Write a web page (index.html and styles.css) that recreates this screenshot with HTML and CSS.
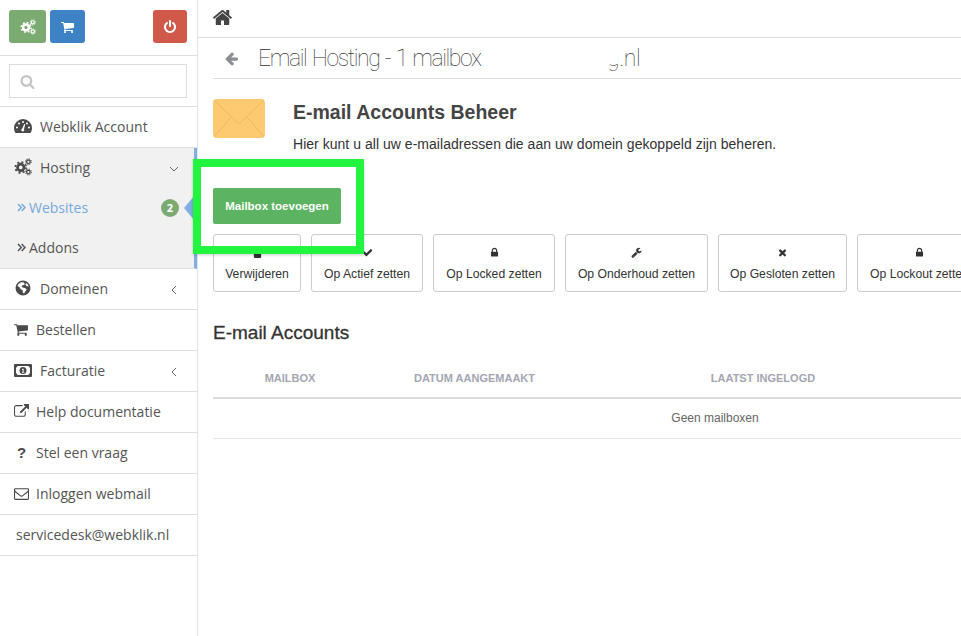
FILE: index.html
```html
<!DOCTYPE html>
<html lang="nl">
<head>
<meta charset="utf-8">
<title>Email Hosting</title>
<link rel="stylesheet" href="styles.css">
</head>
<body>
<svg class="defs" width="0" height="0" aria-hidden="true">
  <defs>
    <symbol id="i-cart" viewBox="0 0 1792 1792"><path d="M640 1536q0 52-38 90t-90 38-90-38-38-90 38-90 90-38 90 38 38 90zm896 0q0 52-38 90t-90 38-90-38-38-90 38-90 90-38 90 38 38 90zm128-1088v512q0 24-16.5 42.5t-40.5 21.5l-1044 122q13 60 13 70 0 16-24 64h920q26 0 45 19t19 45-19 45-45 19h-1024q-26 0-45-19t-19-45q0-11 8-31.5t16-36 21.5-40 15.5-29.5l-177-823h-204q-26 0-45-19t-19-45 19-45 45-19h256q16 0 28.5 6.5t19.5 15.5 13 24.5 8 26 5.5 29.5 4.5 26h1201q26 0 45 19t19 45z"/></symbol>
    <symbol id="i-home" viewBox="0 0 1792 1792"><path d="M1472 992v480q0 26-19 45t-45 19h-384v-384h-256v384h-384q-26 0-45-19t-19-45v-480q0-1 .5-3t.5-3l575-474 575 474q1 2 1 6zm223-69l-62 74q-8 9-21 11h-3q-13 0-21-7l-692-577-692 577q-12 8-24 7-13-2-21-11l-62-74q-8-10-7-23.5t11-21.5l719-599q32-26 76-26t76 26l244 204v-195q0-14 9-23t23-9h192q14 0 23 9t9 23v408l219 182q10 8 11 21.5t-7 23.5z"/></symbol>
    <symbol id="i-lock" viewBox="0 0 1792 1792"><path d="M640 768h512v-192q0-106-75-181t-181-75-181 75-75 181v192zm832 96v576q0 40-28 68t-68 28h-960q-40 0-68-28t-28-68v-576q0-40 28-68t68-28h32v-192q0-184 132-316t316-132 316 132 132 316v192h32q40 0 68 28t28 68z"/></symbol>
    <symbol id="i-check" viewBox="0 0 1792 1792"><path d="M1671 566q0 40-28 68l-724 724-136 136q-28 28-68 28t-68-28l-136-136-362-362q-28-28-28-68t28-68l136-136q28-28 68-28t68 28l294 295 656-657q28-28 68-28t68 28l136 136q28 28 28 68z"/></symbol>
    <symbol id="i-times" viewBox="0 0 1792 1792"><path d="M1490 1322q0 40-28 68l-136 136q-28 28-68 28t-68-28l-294-294-294 294q-28 28-68 28t-68-28l-136-136q-28-28-28-68t28-68l294-294-294-294q-28-28-28-68t28-68l136-136q28-28 68-28t68 28l294 294 294-294q28-28 68-28t68 28l136 136q28 28 28 68t-28 68l-294 294 294 294q28 28 28 68z"/></symbol>
    <symbol id="i-search" viewBox="0 0 1792 1792"><path d="M1216 832q0-185-131.5-316.5t-316.5-131.5-316.5 131.5-131.5 316.5 131.5 316.5 316.5 131.5 316.5-131.5 131.5-316.5zm512 832q0 52-38 90t-90 38q-54 0-90-38l-343-342q-179 124-399 124-143 0-273.5-55.5t-225-150-150-225-55.5-273.5 55.5-273.5 150-225 225-150 273.5-55.5 273.5 55.5 225 150 150 225 55.5 273.5q0 220-124 399l343 343q37 37 37 90z"/></symbol>
    <symbol id="i-left" viewBox="0 0 1792 1792"><path d="M1664 896v128q0 53-32.5 90.5t-84.5 37.5h-704l293 294q38 36 38 90t-38 90l-75 76q-37 37-90 37-52 0-91-37l-651-652q-37-37-37-90 0-52 37-91l651-650q38-38 91-38 52 0 90 38l75 74q38 38 38 91t-38 91l-293 293h704q52 0 84.5 37.5t32.5 90.5z"/></symbol>
    <symbol id="i-power" viewBox="0 0 1792 1792"><path d="M1664 896q0 156-61 298t-164 245-245 164-298 61-298-61-245-164-164-245-61-298q0-182 80.5-343t226.5-270q43-32 95.5-25t83.5 50q32 42 24.5 94.5t-49.5 84.5q-98 74-151.5 181t-53.5 228q0 104 40.5 198.5t109.5 163.5 163.5 109.5 198.5 40.5 198.5-40.5 163.5-109.5 109.5-163.5 40.5-198.5q0-121-53.5-228t-151.5-181q-42-32-49.5-84.5t24.5-94.5q31-43 84-50t95 25q146 109 226.5 270t80.5 343zm-640-768v640q0 52-38 90t-90 38-90-38-38-90v-640q0-52 38-90t90-38 90 38 38 90z"/></symbol>
    <symbol id="i-wrench" viewBox="0 0 1792 1792"><path d="M448 1472q0-26-19-45t-45-19-45 19-19 45 19 45 45 19 45-19 19-45zm644-420l-682 682q-37 37-90 37-52 0-91-37l-106-108q-38-36-38-90 0-53 38-91l681-681q39 98 114.5 173.5t173.5 114.5zm634-435q0 39-23 106-47 134-164.5 217.5t-258.5 83.5q-185 0-316.5-131.5t-131.5-316.5 131.5-316.5 316.5-131.5q58 0 121.5 16.5t107.5 46.5q16 11 16 28t-16 28l-293 169v224l193 107q5-3 79-48.5t135.5-81 70.5-35.5q15 0 23.5 10t8.5 25z"/></symbol>
    <symbol id="i-ext" viewBox="0 0 1792 1792"><path d="M1408 928v320q0 119-84.5 203.5t-203.5 84.5h-832q-119 0-203.5-84.5t-84.5-203.5v-832q0-119 84.5-203.5t203.5-84.5h704q14 0 23 9t9 23v64q0 14-9 23t-23 9h-704q-66 0-113 47t-47 113v832q0 66 47 113t113 47h832q66 0 113-47t47-113v-320q0-14 9-23t23-9h64q14 0 23 9t9 23zm384-864v512q0 26-19 45t-45 19-45-19l-176-176-652 652q-10 10-23 10t-23-10l-114-114q-10-10-10-23t10-23l652-652-176-176q-19-19-19-45t19-45 45-19h512q26 0 45 19t19 45z"/></symbol>
    <symbol id="i-mail" viewBox="0 0 1792 1792"><path d="M1664 1504v-768q-32 36-69 66-268 206-426 338-51 43-83 67t-86.5 48.5-102.5 24.5h-2q-48 0-102.5-24.5t-86.5-48.5-83-67q-158-132-426-338-37-30-69-66v768q0 13 9.5 22.5t22.5 9.5h1472q13 0 22.5-9.5t9.5-22.5zm0-1051v-24.5l-.5-13-3-12.5-5.5-9-9-7.5-14-2.5h-1472q-13 0-22.5 9.5t-9.5 22.5q0 168 147 284 193 152 401 317 6 5 35 29.5t46 37.5 44.5 31.5 50.5 27.5 43 9h2q20 0 43-9t50.5-27.5 44.5-31.5 46-37.5 35-29.5q208-165 401-317 54-43 100.5-115.5t46.5-131.5zm128-37v1088q0 66-47 113t-113 47h-1472q-66 0-113-47t-47-113v-1088q0-66 47-113t113-47h1472q66 0 113 47t47 113z"/></symbol>
    <symbol id="i-cogs" viewBox="0 0 20 20">
      <circle cx="7.5" cy="10.5" r="3.6" fill="none" stroke="currentColor" stroke-width="3"/>
      <circle cx="7.5" cy="10.5" r="6" fill="none" stroke="currentColor" stroke-width="2" stroke-dasharray="2.3 2.41"/>
      <circle cx="16" cy="4.2" r="2" fill="none" stroke="currentColor" stroke-width="1.5"/>
      <circle cx="16" cy="4.2" r="3.3" fill="none" stroke="currentColor" stroke-width="1.1" stroke-dasharray="1.3 1.29"/>
      <circle cx="16" cy="15.6" r="2" fill="none" stroke="currentColor" stroke-width="1.5"/>
      <circle cx="16" cy="15.6" r="3.3" fill="none" stroke="currentColor" stroke-width="1.1" stroke-dasharray="1.3 1.29"/>
    </symbol>
    <symbol id="i-gauge" viewBox="0 0 18 14">
      <path fill-rule="evenodd" d="M9 0a9 9 0 0 1 9 9c0 1.800-.5 3.500-1.400 4.800-.2.200-.4.200-.6.200H2c-.2 0-.4 0-.6-.2A9 9 0 0 1 0 9a9 9 0 0 1 9-9zM9 2a1 1 0 1 0 0 2 1 1 0 0 0 0-2zM5 3.500a1 1 0 1 0 0 2 1 1 0 0 0 0-2zM13 3.500a1 1 0 1 0 0 2 1 1 0 0 0 0-2zM3 7.500a1 1 0 1 0 0 2 1 1 0 0 0 0-2zM15 7.500a1 1 0 1 0 0 2 1 1 0 0 0 0-2zM10.200 5l-1.900 4.600a1.500 1.500 0 1 0 1.700.6l1.200-4.900z"/>
    </symbol>
    <symbol id="i-globe" viewBox="0 0 16 16">
      <path fill-rule="evenodd" d="M8 .5a7.500 7.500 0 1 1 0 15 7.500 7.500 0 0 1 0-15zM6 2.300C4.500 3 3 4.500 2.500 6l2 1.200 1.500 2.300 1.600.5.200 2.200 1.200 1.600 1.200-2.200 1.500-1.800-1.300-1.600-2.600-.8-1.300-1 1-1.200 1.700-.3.500-1.300-1.500-1.300zM11.500 3.200l-1.200 1.400 1.200 1.500 2.200.5c-.4-1.500-1.100-2.700-2.200-3.400z"/>
    </symbol>
    <symbol id="i-money" viewBox="0 0 18 13">
      <path fill-rule="evenodd" d="M1 0h16a1 1 0 0 1 1 1v11a1 1 0 0 1-1 1H1a1 1 0 0 1-1-1V1a1 1 0 0 1 1-1zM3.500 2A2 2 0 0 1 2 3.700v5.600A2 2 0 0 1 3.500 11h11a2 2 0 0 1 1.500-1.700V3.700A2 2 0 0 1 14.500 2zM9 3a3.500 3.500 0 1 1 0 7 3.500 3.500 0 0 1 0-7zM8 5v.8h.6V8H8v.7h2.300V8h-.7V4.800h-.8z"/>
    </symbol>
    <symbol id="i-dbl" viewBox="0 0 9 9">
      <path fill="none" stroke="currentColor" stroke-width="1.500" d="M1 1l3.300 3.500L1 8M4.700 1L8 4.500 4.700 8"/>
    </symbol>
    <symbol id="i-trash" viewBox="0 0 12 12">
      <path d="M4.500 0h3l.6 1.500H11v1.300H1V1.500h2.900zM2 3.500h8v7.300A1.200 1.200 0 0 1 8.800 12H3.200A1.200 1.200 0 0 1 2 10.800z"/>
    </symbol>
  </defs>
</svg>

<div class="app">
  <aside class="sidebar">
    <div class="tools">
      <a class="tool tool-green"><svg class="tool-cogs"><use href="#i-cogs"/></svg></a>
      <a class="tool tool-blue"><svg class="tool-icon"><use href="#i-cart"/></svg></a>
      <a class="tool tool-red"><svg class="tool-icon"><use href="#i-power"/></svg></a>
    </div>
    <div class="search">
      <div class="search-box"><svg class="search-icon"><use href="#i-search"/></svg></div>
    </div>
    <nav>
      <a class="row wide"><svg class="ico ico-gauge"><use href="#i-gauge"/></svg>Webklik Account</a>
      <div class="group">
        <a class="row-in wide"><svg class="ico ico-cogs"><use href="#i-cogs"/></svg>Hosting<svg class="chev" viewBox="0 0 10 10"><path d="M1 3l4 4 4-4"/></svg></a>
        <a class="sub sub-active"><svg class="dbl"><use href="#i-dbl"/></svg>Websites<span class="badge">2</span><span class="pointer"></span></a>
        <a class="sub"><svg class="dbl"><use href="#i-dbl"/></svg>Addons</a>
      </div>
      <a class="row wide"><svg class="ico ico-globe"><use href="#i-globe"/></svg>Domeinen<svg class="chev" viewBox="0 0 10 10"><path d="M7 1L3 5l4 4"/></svg></a>
      <a class="row"><svg class="ico"><use href="#i-cart"/></svg>Bestellen</a>
      <a class="row wide"><svg class="ico ico-money"><use href="#i-money"/></svg>Facturatie<svg class="chev" viewBox="0 0 10 10"><path d="M7 1L3 5l4 4"/></svg></a>
      <a class="row"><svg class="ico"><use href="#i-ext"/></svg>Help documentatie</a>
      <a class="row"><span class="ico ico-q">?</span>Stel een vraag</a>
      <a class="row"><svg class="ico"><use href="#i-mail"/></svg>Inloggen webmail</a>
      <a class="row plain">servicedesk@webklik.nl</a>
    </nav>
  </aside>

  <main class="main">
    <div class="topbar"><svg class="home"><use href="#i-home"/></svg></div>
    <div class="page">
      <div class="titlebar">
        <svg class="back"><use href="#i-left"/></svg>
        <h1>Email Hosting - 1 mailbox</h1>
        <span class="domain"><span class="domain-g">g</span>.nl<span class="redact"></span></span>
      </div>
      <div class="intro">
        <svg class="envelope" viewBox="0 0 52 39">
          <rect width="52" height="39" rx="4" fill="#fdca72"/>
          <path d="M1 1l25 24L51 1M1 38l17-20M51 38L34 18" fill="none" stroke="#ecb75d" stroke-width="1"/>
        </svg>
        <div>
          <h2>E-mail Accounts Beheer</h2>
          <p>Hier kunt u all uw e-mailadressen die aan uw domein gekoppeld zijn beheren.</p>
        </div>
      </div>
      <a class="add">Mailbox toevoegen</a>
      <div class="actions">
        <a class="action"><svg><use href="#i-trash"/></svg>Verwijderen</a>
        <a class="action"><svg><use href="#i-check"/></svg>Op Actief zetten</a>
        <a class="action"><svg><use href="#i-lock"/></svg>Op Locked zetten</a>
        <a class="action"><svg><use href="#i-wrench"/></svg>Op Onderhoud zetten</a>
        <a class="action"><svg><use href="#i-times"/></svg>Op Gesloten zetten</a>
        <a class="action"><svg><use href="#i-lock"/></svg>Op Lockout zetten</a>
      </div>
      <h3>E-mail Accounts</h3>
      <div class="table">
        <div class="thead">
          <span>MAILBOX</span><span>DATUM AANGEMAAKT</span><span>LAATST INGELOGD</span><span></span>
        </div>
        <div class="empty">Geen mailboxen</div>
      </div>
    </div>
  </main>
</div>
<div class="callout"></div>
</body>
</html>
```
FILE: styles.css
```css
* { box-sizing: border-box; }
html, body { margin: 0; height: 100%; overflow: hidden; background: #fff; }
body { position: relative; width: 961px; height: 636px; font-family: "Liberation Sans", Arial, sans-serif; color: #333; }
.defs { position: absolute; }
svg { fill: currentColor; display: block; }

.app { display: flex; height: 636px; }

.sidebar { width: 198px; flex: none; border-right: 1px solid #e2e2e2; font-family: "Open Sans", sans-serif; font-size: 14px; color: #555; }
.tools { height: 56px; display: flex; padding: 10px 10px 0 9px; border-bottom: 1px solid #dedede; gap: 4px; }
.tool { height: 33px; border-radius: 3px; display: flex; align-items: center; justify-content: center; color: #fff; }
.tool-green { width: 37px; background: #7cab71; }
.tool-blue { width: 35px; background: #3d82c4; }
.tool-red { width: 34px; background: #d0594a; margin-left: auto; }
.tool-cogs { width: 16px; height: 16px; }
.tool-icon { width: 14px; height: 14px; }

.search { height: 51px; padding: 8px 10px 0 9px; border-bottom: 1px solid #dedede; }
.search-box { height: 34px; border: 1px solid #dcdcdc; display: flex; align-items: center; padding-left: 10px; color: #c2c4c6; }
.search-icon { width: 15px; height: 15px; }

.row, .row-in, .sub { display: flex; align-items: center; padding-left: 14px; padding-bottom: 2px; color: #555; position: relative; }
.row { height: 41px; border-bottom: 1px solid #dedede; }
.row-in, .sub { height: 40px; }
.ico { width: 15px; height: 15px; margin-right: 7px; flex: none; color: #4a4a4a; }
.wide .ico { width: 18px; margin-right: 8px; }
.ico-gauge { height: 14px; }
.ico-cogs { height: 18px; }
.ico-globe { height: 16px; }
.ico-money { height: 13px; }
.ico-q { font: bold 15px/15px "Liberation Sans", sans-serif; text-align: center; }
.plain { padding-left: 16px; }
.chev { position: absolute; left: 169px; top: 50%; margin-top: -4px; width: 10px; height: 10px; fill: none; stroke: #666; stroke-width: 1; }

.group { height: 121px; background: #f1f1f1; border-right: 3px solid #7fb0de; border-bottom: 1px solid #dedede; margin-right: 0; }
.sub { padding-left: 17px; }
.sub-active { color: #76a9dc; }
.dbl { width: 9px; height: 9px; margin-right: 3px; }
.badge { position: absolute; left: 161px; top: 11px; width: 18px; height: 18px; border-radius: 50%; background: #7cab71; color: #fff; font-size: 11px; font-weight: 700; line-height: 18px; text-align: center; }
.pointer { position: absolute; left: 184px; top: 8px; width: 10px; height: 24px; background: #7fb0de; clip-path: polygon(100% 0, 100% 100%, 0 50%); }

.main { flex: 1; min-width: 0; overflow: hidden; }
.topbar { height: 38px; border-bottom: 1px solid #dedede; padding: 7px 0 0 14px; color: #444; }
.home { width: 21px; height: 21px; }
.page { padding-left: 15px; }
.titlebar { height: 41px; border-bottom: 1px solid #dedede; display: flex; align-items: center; position: relative; }
.back { width: 15px; height: 15px; color: #8a8d93; margin-left: 11px; margin-right: 19px; }
h1 { margin: 0; font: 100 23px/1 Roboto, sans-serif; letter-spacing: -1.4px; word-spacing: 1.3px; color: #333; white-space: nowrap; }
.domain { font: 100 23px/1 Roboto, sans-serif; letter-spacing: -0.4px; color: #333; position: absolute; left: 394px; top: 9px; white-space: nowrap; }
.redact { position: absolute; left: -4px; top: -2px; width: 15px; height: 19px; background: #fff; }
.domain-g { color: #555; }

.intro { display: flex; padding-top: 20px; height: 109px; }
.envelope { width: 52px; height: 39px; margin-right: 28px; flex: none; }
h2 { margin: 3px 0 0; font-size: 19.500px; line-height: 20px; font-weight: 700; color: #444; }
.intro p { margin: 12px 0 0; font-size: 14px; line-height: 20px; letter-spacing: 0.03px; color: #333; }

.add { display: flex; align-items: center; justify-content: center; width: 128px; height: 36px; background: #5cb462; border-radius: 2px; color: #fff; font-size: 11.500px; font-weight: 700; }
.actions { display: grid; grid-template-columns: 88px 112px 122px 143px 129px max-content; gap: 10px; margin-top: 10px; }
.action { height: 58px; border: 1px solid #ccc; border-radius: 3px; padding: 0 12px; display: flex; flex-direction: column; align-items: center; font-size: 12.200px; color: #333; white-space: nowrap; }
.action svg { width: 11px; height: 11px; margin: 12px 0 9px; flex: none; }
h3 { margin: 30px 0 0; font-size: 19px; line-height: 22px; font-weight: 400; -webkit-text-stroke: 0.3px #333; color: #333; }

.table { width: 1004px; margin-top: 23px; }
.thead { display: grid; grid-template-columns: 154px 215px 362px 1fr; height: 32px; padding-top: 1px; border-bottom: 2px solid #ddd; font-size: 11px; font-weight: 700; color: #a4a6b2; text-align: center; line-height: 20px; }
.empty { height: 40px; border-bottom: 1px solid #e8e8e8; text-align: center; line-height: 39px; font-size: 12px; color: #666; }

.callout { position: absolute; left: 193px; top: 159px; width: 171px; height: 95px; border: 8px solid #22f53f; box-shadow: 0 1px 3px rgba(0,0,0,.2); }
```
